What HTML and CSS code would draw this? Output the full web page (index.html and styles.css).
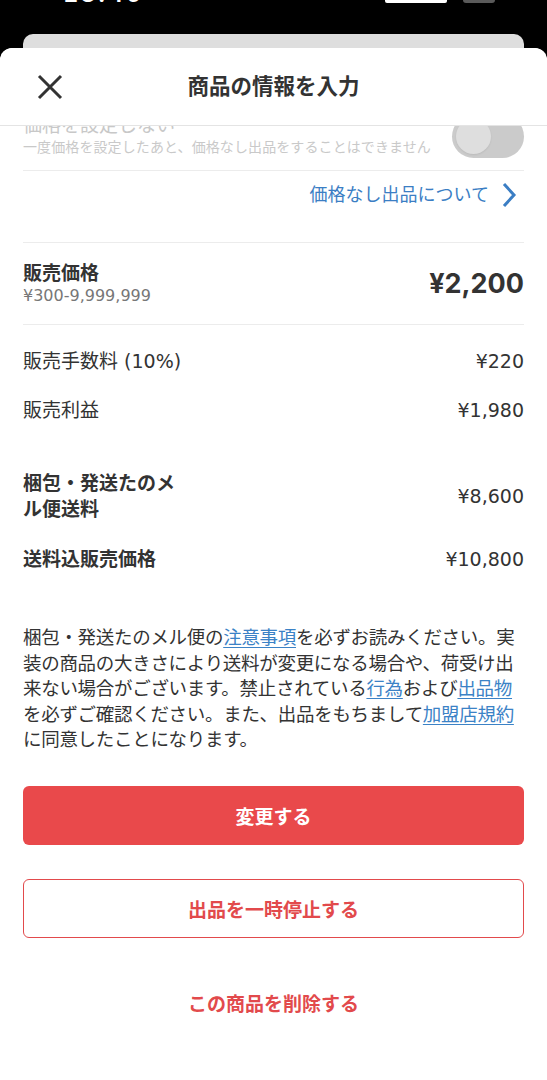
FILE: index.html
```html
<!DOCTYPE html>
<html lang="ja">
<head>
<meta charset="utf-8">
<title>商品の情報を入力</title>
<link rel="stylesheet" href="styles.css">
</head>
<body>
<div class="status">
  <div class="status-row">
    <span class="time">23:46</span>
    <span class="status-icons"><span class="sig"></span><span class="batt"></span></span>
  </div>
  <div class="back-card"></div>
</div>
<div class="sheet">
  <header class="sheet-header">
    <svg class="close" width="26" height="26" viewBox="0 0 26 26"><path d="M2 2 L24 24 M24 2 L2 24" stroke="#333" stroke-width="3" stroke-linecap="butt" fill="none"/></svg>
    <h1 class="title">商品の情報を入力</h1>
  </header>
  <main class="content">
    <div class="noprice-row">
      <div class="noprice-text">
        <div class="noprice-title">価格を設定しない</div>
        <div class="noprice-sub">一度価格を設定したあと、価格なし出品をすることはできません</div>
      </div>
      <div class="toggle"><span class="knob"></span></div>
    </div>
    <div class="link-row">
      <span class="link">価格なし出品について</span>
      <svg class="chev" width="16" height="26" viewBox="0 0 16 26"><path d="M3 2 L13 13 L3 24" stroke="#3b7ec4" stroke-width="3" fill="none" stroke-linejoin="miter"/></svg>
    </div>
    <div class="price-row">
      <div class="price-label">
        <div class="bold-label">販売価格</div>
        <div class="range">¥300-9,999,999</div>
      </div>
      <div class="price-value">¥2,200</div>
    </div>
    <div class="fees">
      <div class="line"><span>販売手数料 (10%)</span><span>¥220</span></div>
      <div class="line"><span>販売利益</span><span>¥1,980</span></div>
    </div>
    <div class="shipping">
      <div class="line"><span class="bold-label ship-label">梱包・発送たのメル便送料</span><span>¥8,600</span></div>
      <div class="line"><span class="bold-label">送料込販売価格</span><span>¥10,800</span></div>
    </div>
    <p class="notice">梱包・発送たのメル便の<a class="u">注意事項</a>を必ずお読みください。実装の商品の大きさにより送料が変更になる場合や、荷受け出来ない場合がございます。禁止されている<a class="u">行為</a>および<a class="u">出品物</a>を必ずご確認ください。また、出品をもちまして<a class="u">加盟店規約</a>に同意したことになります。</p>
    <div class="actions">
      <button class="btn primary">変更する</button>
      <button class="btn outline">出品を一時停止する</button>
      <button class="btn text">この商品を削除する</button>
    </div>
  </main>
</div>
</body>
</html>
```
FILE: styles.css
```css
* { box-sizing: border-box; }
html, body { margin: 0; padding: 0; }
body {
  background: #000;
  font-family: "DejaVu Sans", "Noto Sans CJK JP", sans-serif;
  color: #333;
  width: 547px;
  height: 1080px;
  overflow: hidden;
}
.status {
  height: 48px;
  display: flex;
  flex-direction: column;
  overflow: hidden;
}
.status-row {
  height: 34px;
  display: flex;
  justify-content: space-between;
  align-items: flex-start;
  padding: 0 52px 0 64px;
}
.time {
  color: #fff;
  font-family: "Inter", sans-serif;
  font-weight: 700;
  font-size: 22px;
  line-height: 22px;
  margin-top: -17px;
  letter-spacing: 3px;
}
.status-icons { display: flex; gap: 16px; align-items: flex-start; }
.sig { width: 62px; height: 3px; background: #fff; border-radius: 0 0 2px 2px; }
.batt { width: 32px; height: 3px; background: #5a5a5a; border-radius: 0 0 3px 3px; }
.back-card {
  margin: 0 23px;
  height: 14px;
  background: #dedede;
  border-radius: 10px 10px 0 0;
}
.sheet {
  background: #fff;
  border-radius: 12px 12px 0 0;
  height: 1032px;
  overflow: hidden;
  display: flex;
  flex-direction: column;
}
.sheet-header {
  height: 78px;
  flex: none;
  border-bottom: 1px solid #e4e4e4;
  display: flex;
  align-items: center;
  position: relative;
  z-index: 2;
  background: #fff;
  border-radius: 12px 12px 0 0;
  padding-left: 37px;
}
.close { display: block; }
.title {
  margin: 0;
  position: absolute;
  left: 0; right: 0;
  text-align: center;
  font-size: 21.5px;
  font-weight: 700;
  line-height: 28px;
  pointer-events: none;
  color: #333;
}
.content {
  padding: 0 23px;
  overflow: hidden;
  flex: 1;
}
.noprice-row {
  margin-top: -13px;
  display: flex;
  align-items: center;
  justify-content: space-between;
  padding-bottom: 12px;
  border-bottom: 1px solid #ececec;
}
.noprice-title {
  font-size: 19px;
  line-height: 24px;
  color: #c8c8c8;
}
.noprice-sub {
  font-size: 14px;
  line-height: 21px;
  color: #c9c9c9;
  letter-spacing: 0.1px;
}
.toggle {
  width: 72px;
  height: 43px;
  border-radius: 22px;
  background: #cbcbcb;
  padding: 4px;
  flex: none;
  margin-top: 1px;
}
.knob {
  display: block;
  width: 35px;
  height: 35px;
  border-radius: 50%;
  background: #dedede;
  box-shadow: 0 1px 2px rgba(0,0,0,0.08);
}
.link-row {
  display: flex;
  justify-content: flex-end;
  align-items: center;
  gap: 12px;
  padding: 11px 7px 34px 0;
  border-bottom: 1px solid #ececec;
}
.link {
  color: #3b7ec4;
  font-size: 18px;
  line-height: 24px;
}
.chev { display: block; }
.price-row {
  display: flex;
  justify-content: space-between;
  align-items: center;
  padding: 17px 0 18px;
  border-bottom: 1px solid #ececec;
}
.bold-label {
  font-weight: 700;
  font-size: 19px;
  line-height: 26px;
}
.range {
  font-size: 16px;
  line-height: 20px;
  color: #777;
}
.price-value {
  font-family: "Inter", sans-serif;
  font-size: 27px;
  font-weight: 700;
  line-height: 32px;
  margin-top: 2px;
}
.fees {
  padding-top: 23px;
  display: flex;
  flex-direction: column;
  gap: 23px;
}
.shipping {
  margin-top: 47px;
  display: flex;
  flex-direction: column;
  gap: 24px;
}
.line {
  display: flex;
  justify-content: space-between;
  align-items: center;
  font-size: 19px;
  line-height: 26px;
}
.ship-label { width: 160px; }
.notice {
  margin: 53px 0 0;
  font-size: 18.5px;
  letter-spacing: -0.3px;
  line-height: 25.5px;
  color: #333;
}
.u {
  color: #3b82c6;
  text-decoration: underline;
  text-underline-offset: 3px;
  text-decoration-thickness: 1px;
}
.actions {
  margin-top: 33px;
  display: flex;
  flex-direction: column;
  gap: 34px;
}
.btn {
  height: 59px;
  width: 100%;
  border-radius: 6px;
  font-family: inherit;
  font-size: 19px;
  font-weight: 700;
  border: 1px solid transparent;
  background: none;
  padding: 0;
}
.primary { background: #e9494b; color: #fff; }
.outline { border-color: #e24a4c; color: #e24a4c; background: #fff; }
.text { color: #e24a4c; margin-top: 1px; }
```
